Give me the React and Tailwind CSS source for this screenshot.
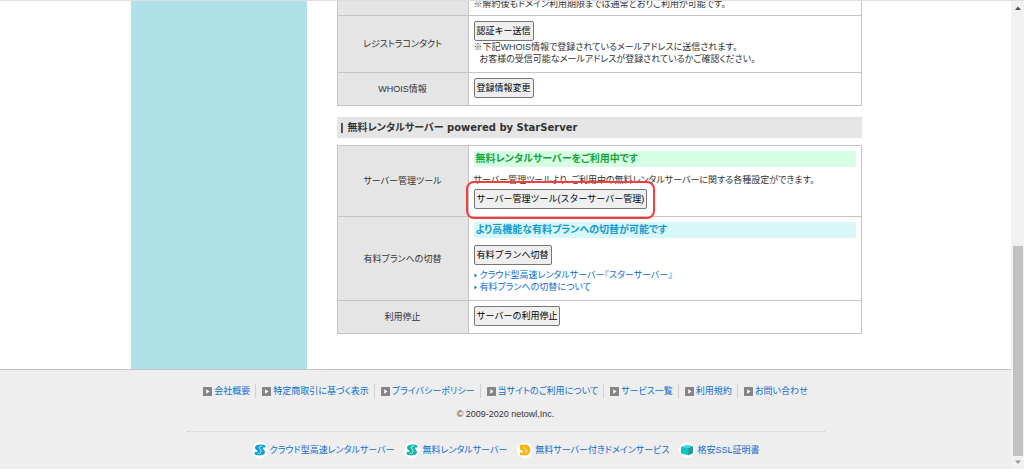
import React from "react";

const BTN =
  "block h-5 rounded-[2px] border border-[#777] bg-[#efefef] px-[2px] text-[9px] leading-[18px] text-black whitespace-nowrap [font-feature-settings:normal]";
const TH =
  "w-1/4 border border-[#c4c4c4] bg-[#e5e5e5] px-1 text-center align-middle font-normal";
const TD = "border border-[#c4c4c4] px-[5px] pt-[5px] pb-[7px] align-top";
const LINK = "text-[#0c6fd0] no-underline hover:underline";

function Bullet() {
  return (
    <svg className="h-[5px] w-1 shrink-0" viewBox="0 0 4 5" aria-hidden="true">
      <path d="M0.5 0.5 3 2.5 0.5 4.5Z" fill="#0c6fd0" />
    </svg>
  );
}

function NavIcon() {
  return (
    <svg className="h-[9px] w-[9px] shrink-0" viewBox="0 0 9 9" aria-hidden="true">
      <rect width="9" height="9" rx="0.5" fill="#858585" />
      <path d="M3.2 2.2 6.6 4.5 3.2 6.8Z" fill="#fff" />
    </svg>
  );
}

function SLogo({ color }) {
  return (
    <svg className="h-4 w-4 shrink-0" viewBox="0 0 16 16" aria-hidden="true">
      <circle cx="8" cy="8" r="8" fill="#fff" />
      <path
        d="M13.300 3.200C10 1.900 3.200 2.200 3 5.500 2.900 7.900 6 8.200 5.500 9.600 5.200 10.300 4 10.400 2.600 10.100V12.500C5.500 13.900 12.600 14 13 10.300 13.200 7.800 10.300 7.300 10.600 6 10.800 5.200 12 5.300 13.300 5.700Z"
        fill={color}
      />
      <path
        d="M9.800 4C6.800 4 6.600 5.900 8.200 7.300 10 8.900 9.300 11.200 6.200 11.600"
        fill="none"
        stroke="#fff"
        strokeWidth="0.900"
      />
    </svg>
  );
}

function DLogo() {
  return (
    <svg className="h-4 w-4 shrink-0" viewBox="0 0 16 16" aria-hidden="true">
      <circle cx="8" cy="8" r="8" fill="#fff" />
      <path d="M3 2.800h5.300C11.600 2.800 13.300 5 13.300 8s-1.900 5.300-5 5.300H3Z" fill="#fdb10b" />
      <path d="M6.300 5 9 7.400c1.200 1.200.8 3-.8 3.500" fill="none" stroke="#fff" strokeWidth="1" />
      <path d="M3 7.200 6.300 9.500C6.700 9.900 6.400 10.400 5.900 10.400H3Z" fill="#fff" />
    </svg>
  );
}

function CubeLogo() {
  return (
    <svg className="h-4 w-4 shrink-0" viewBox="0 0 16 16" aria-hidden="true">
      <circle cx="8" cy="8" r="8" fill="#fff" />
      <path d="M2 5 8 3 14 4.300V11L9.500 13.300 2 11.500Z" fill="#10c4c4" />
      <path d="M2 5 8 3 14 4.300 9.500 6.300Z" fill="#45dcda" />
      <path d="M9.500 6.300 14 4.300V11L9.500 13.300Z" fill="#149b9e" />
      <path d="M10.700 7.500 12.500 6.800V10.500" fill="none" stroke="#a66d75" strokeWidth="1" />
    </svg>
  );
}

const NAV = [
  "会社概要",
  "特定商取引に基づく表示",
  "プライバシーポリシー",
  "当サイトのご利用について",
  "サービス一覧",
  "利用規約",
  "お問い合わせ",
];

const SERVICES = [
  ["クラウド型高速レンタルサーバー", <SLogo color="#10a0d8" />],
  ["無料レンタルサーバー", <SLogo color="#12b5a8" />],
  ["無料サーバー付きドメインサービス", <DLogo />],
  ["格安SSL証明書", <CubeLogo />],
];

function ScrollRail() {
  return (
    <div className="flex w-[13px] shrink-0 flex-col items-center bg-[#f1f1f1]" aria-hidden="true">
      <svg className="mt-1 h-[6px] w-[6px]" viewBox="0 0 6 6">
        <path d="M0 5 3 1.500 6 5Z" fill="#505050" />
      </svg>
      <div className="grow-[235]" />
      <div className="w-[10px] grow-[210] bg-[#c1c1c1]" />
      <svg className="mt-1 mb-1 h-[5px] w-[6px]" viewBox="0 0 6 5">
        <path d="M0 0.500 3 4 6 0.500Z" fill="#969696" />
      </svg>
    </div>
  );
}

export default function App() {
  return (
    <div
      lang="ja"
      className="flex border-t border-[#dedee3] bg-white font-['Liberation_Sans','Noto_Sans_CJK_JP',sans-serif] text-[9px] leading-3 text-[#333] [font-feature-settings:'palt']"
    >
      <div className="min-w-0 grow">
        <div className="mx-auto flex max-w-[750px]">
          <aside className="w-44 shrink-0 bg-[#afe2e8]" />
          <main className="min-w-0 grow pr-[19px] pb-[35px] pl-[30px]">
            <table className="w-full table-fixed border-collapse">
              <tbody>
                <tr>
                  <th className={TH + " border-t-0"} />
                  <td className="border border-t-0 border-[#c4c4c4] px-[5px]">
                    <div className="flex h-[14px] items-start overflow-hidden">
                      <p className="-mt-[3px]">※解約後もドメイン利用期限までは通常どおりご利用が可能です。</p>
                    </div>
                  </td>
                </tr>
                <tr>
                  <th scope="row" className={TH}>レジストラコンタクト</th>
                  <td className={TD}>
                    <button type="button" className={BTN}>認証キー送信</button>
                    <p>※下記WHOIS情報で登録されているメールアドレスに送信されます。</p>
                    <p className="pl-[6px]">お客様の受信可能なメールアドレスが登録されているかご確認ください。</p>
                  </td>
                </tr>
                <tr>
                  <th scope="row" className={TH}>WHOIS情報</th>
                  <td className={TD}>
                    <button type="button" className={BTN}>登録情報変更</button>
                  </td>
                </tr>
              </tbody>
            </table>

            <h2 className="mt-[11px] mb-[7px] flex h-[21px] items-center gap-[5px] bg-[#e5e5e5] pl-1 font-['DejaVu_Sans','Noto_Sans_CJK_JP',sans-serif] text-[10px] font-bold text-[#333]">
              <span className="h-[10px] w-[2px] bg-[#555]" />
              無料レンタルサーバー powered by StarServer
            </h2>

            <table className="w-full table-fixed border-collapse">
              <tbody>
                <tr>
                  <th scope="row" className={TH}>サーバー管理ツール</th>
                  <td className={TD}>
                    <p className="mb-[7px] bg-[#d6fee2] px-[2px] text-[10px] leading-4 font-bold text-[#12a53a]">
                      無料レンタルサーバーをご利用中です
                    </p>
                    <p className="mb-[3px]">サーバー管理ツールより、ご利用中の無料レンタルサーバーに関する各種設定ができます。</p>
                    <div className="relative w-fit">
                      <button type="button" className={BTN}>サーバー管理ツール(スターサーバー管理)</button>
                      <span className="pointer-events-none absolute -inset-x-2 -top-2 -bottom-[10px] rounded-lg border-2 border-[#f93c3c]" />
                    </div>
                  </td>
                </tr>
                <tr>
                  <th scope="row" className={TH}>有料プランへの切替</th>
                  <td className={TD}>
                    <p className="mb-[7px] bg-[#d7f7f8] px-[2px] text-[10px] leading-4 font-bold text-[#119bd1]">
                      より高機能な有料プランへの切替が可能です
                    </p>
                    <button type="button" className={BTN}>有料プランへ切替</button>
                    <ul className="mt-1">
                      <li className="flex items-center gap-[2px]">
                        <Bullet />
                        <a href="#cloud" className={LINK}>クラウド型高速レンタルサーバー『スターサーバー』</a>
                      </li>
                      <li className="flex items-center gap-[2px]">
                        <Bullet />
                        <a href="#switch" className={LINK}>有料プランへの切替について</a>
                      </li>
                    </ul>
                  </td>
                </tr>
                <tr>
                  <th scope="row" className={TH}>利用停止</th>
                  <td className={TD}>
                    <button type="button" className={BTN}>サーバーの利用停止</button>
                  </td>
                </tr>
              </tbody>
            </table>
          </main>
        </div>

        <footer className="border-t border-[#c4c4c4] bg-[#eee] pt-[14px] pb-[11px]">
          <nav>
            <ul className="flex justify-center">
              {NAV.map((label, i) => (
                <li
                  key={label}
                  className={"flex h-[14px] items-center " + (i ? "ml-[5px] border-l border-[#d0d0d0] pl-[6px]" : "")}
                >
                  <a href="#nav" className={LINK + " flex items-center gap-[2px] whitespace-nowrap"}>
                    <NavIcon />
                    {label}
                  </a>
                </li>
              ))}
            </ul>
          </nav>
          <p className="mt-[10px] text-center">© 2009-2020 netowl,Inc.</p>
          <ul className="mx-auto mt-[11px] flex max-w-[638px] justify-center gap-[10px] border-t border-dotted border-[#ccc] pt-[10px]">
            {SERVICES.map(([label, icon]) => (
              <li key={label}>
                <a href="#service" className={LINK + " flex items-center gap-[2px] whitespace-nowrap"}>
                  {icon}
                  {label}
                </a>
              </li>
            ))}
          </ul>
        </footer>
      </div>
      <ScrollRail />
    </div>
  );
}
